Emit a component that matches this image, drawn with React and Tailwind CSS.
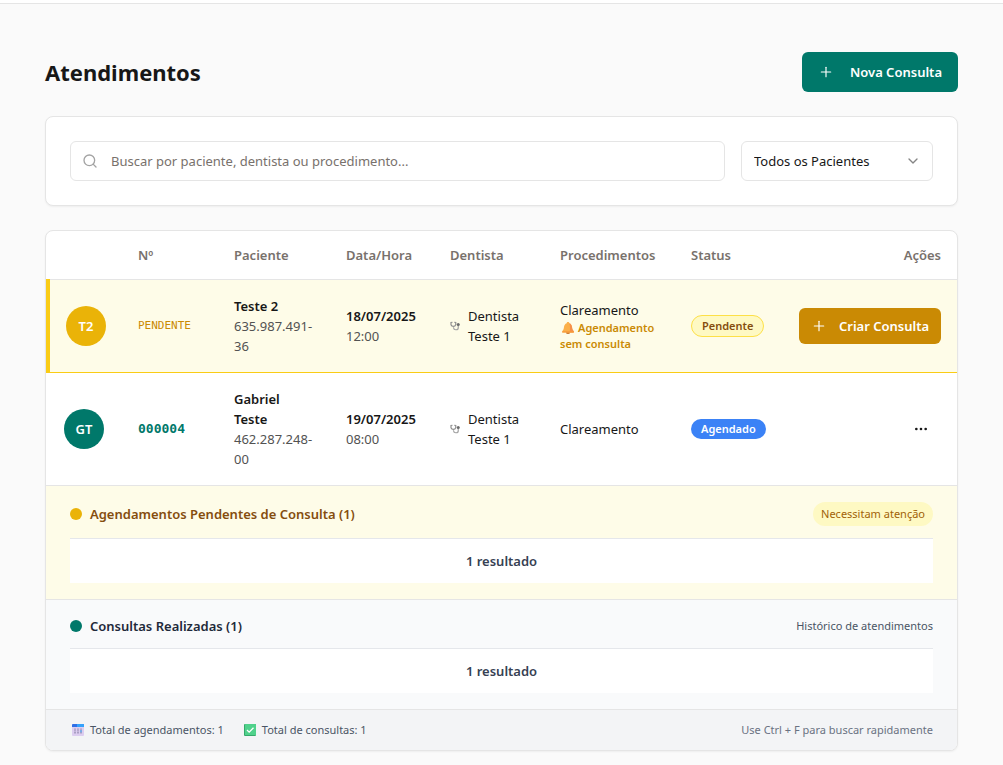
import { Plus, Search, ChevronDown, Ellipsis } from "lucide-react";

function StethoscopeIcon() {
  return (
    <svg viewBox="0 0 20 20" className="h-[10px] w-[10px] shrink-0" fill="none" aria-hidden="true">
      <path d="M5 2.500 2 3v4.500a5 5 0 0 0 9.500 0V3L8.500 2.500" stroke="#8f8f8f" strokeWidth="2.400" />
      <path d="M7 12.500v1a4.500 4.500 0 0 0 4.500 4h1a4 4 0 0 0 4-4V9" stroke="#a3a3a3" strokeWidth="2.400" />
      <circle cx="16.500" cy="7" r="3" fill="#6b6b6b" />
    </svg>
  );
}

function BellIcon() {
  return (
    <svg viewBox="0 0 24 24" className="mr-1 ml-[2px] inline-block h-3 w-3 align-[-2px]" aria-hidden="true">
      <ellipse cx="12" cy="21.500" rx="4" ry="2.500" fill="#c9762c" />
      <path d="M12 0c1.600 0 2.600 1.100 2.600 2.500C18 3.800 19.500 6.500 20 10c.4 4 1.300 6 3.500 8.500V21H.500v-2.500C2.700 16 3.600 14 4 10c.5-3.500 2-6.200 5.400-7.500C9.400 1.100 10.400 0 12 0z" fill="#fbb04a" />
      <path d="M14.600 2.500C18 3.800 19.500 6.500 20 10c.4 4 1.300 6 3.500 8.500V21H15c1.500-6 1.600-12.500-.4-18.500z" fill="#f58f4a" />
      <path d="M.5 18.500h23V21H.5z" fill="#f79a3a" />
    </svg>
  );
}

function CalendarIcon() {
  return (
    <svg viewBox="0 0 12 12" className="h-3 w-3" aria-hidden="true">
      <rect width="12" height="12" rx="1" fill="#dccdf0" />
      <path d="M1 0h10a1 1 0 0 1 1 1v2H0V1a1 1 0 0 1 1-1z" fill="#2f6fe6" />
      <path d="M5 0h6a1 1 0 0 1 1 1v2H5z" fill="#35a2fb" />
      <path d="M3 4.500v5M6 4.500v5M9 4.500v5" stroke="#9a8fb5" strokeWidth="1.500" strokeDasharray="1.300 .5" />
      <path d="M9 6.200v2" stroke="#5aa9ee" strokeWidth="1.500" />
    </svg>
  );
}

function CheckIcon() {
  return (
    <svg viewBox="0 0 12 12" className="h-3 w-3" aria-hidden="true">
      <rect width="12" height="12" rx="1" fill="#35a86b" />
      <rect x="1" width="11" height="11" rx=".5" fill="#4fd18b" />
      <path d="m3 6 2.200 2.200L9.500 3.800" stroke="#fff" strokeWidth="1.300" fill="none" />
    </svg>
  );
}

function Avatar({ children, className }) {
  return (
    <div className={`flex h-10 w-10 items-center justify-center rounded-full text-[13px] font-semibold text-white ${className}`}>
      {children}
    </div>
  );
}

function Patient({ name, doc }) {
  return (
    <td className="p-4">
      <div className="font-semibold text-[#171717]">{name}</div>
      <div className="text-[#525252]">{doc}</div>
    </td>
  );
}

function When({ date, time }) {
  return (
    <td className="p-4">
      <div className="font-semibold">{date}</div>
      <div className="text-[#525252]">{time}</div>
    </td>
  );
}

function Dentist({ name }) {
  return (
    <td className="p-4">
      <div className="flex items-center gap-2">
        <StethoscopeIcon />
        <span>{name}</span>
      </div>
    </td>
  );
}

function Group({ title, note, dot, className, titleClass, noteClass }) {
  return (
    <section className={`border-t border-[#e5e5e5] px-6 py-4 ${className}`}>
      <div className="mb-3 flex items-center justify-between">
        <h2 className={`flex items-center gap-2 text-[13px] leading-5 font-semibold ${titleClass}`}>
          <span className={`h-3 w-3 rounded-full ${dot}`} />
          {title}
        </h2>
        <span className={`text-[11px] leading-4 ${noteClass}`}>{note}</span>
      </div>
      <div className="border-t border-gray-200 bg-white py-3 text-center text-[13px] leading-5 font-semibold text-gray-700">
        1 resultado
      </div>
    </section>
  );
}

const headers = ["", "Nº", "Paciente", "Data/Hora", "Dentista", "Procedimentos", "Status"];

export default function App() {
  return (
    <div className="min-h-screen bg-[#fafafa] font-['Noto_Sans',sans-serif] text-[13px] leading-5 text-[#171717]">
      <header className="h-1 border-b border-[#e5e5e5] bg-white" />
      <main className="flex flex-col gap-6 px-[45px] pt-12 pb-3">
        <div className="flex items-center justify-between">
          <h1 className="text-[22px] leading-8 font-bold">Atendimentos</h1>
          <button type="button" className="flex h-10 items-center gap-4 rounded-md bg-[#00786a] px-4 font-semibold text-white">
            <Plus size={16} strokeWidth={1.75} />
            Nova Consulta
          </button>
        </div>

        <div className="flex gap-4 rounded-lg border border-[#e5e5e5] bg-white p-6 shadow-xs">
          <div className="relative flex-1">
            <Search size={16} className="absolute top-3 left-3 text-[#a3a3a3]" />
            <input
              type="text"
              aria-label="Buscar atendimentos"
              placeholder="Buscar por paciente, dentista ou procedimento..."
              className="h-10 w-full rounded-md border border-[#e5e5e5] bg-white pr-3 pl-10 placeholder:text-[#78716c]"
            />
          </div>
          <div className="relative w-48">
            <select aria-label="Filtrar pacientes" className="h-10 w-full appearance-none rounded-md border border-[#e5e5e5] bg-white px-3">
              <option>Todos os Pacientes</option>
            </select>
            <ChevronDown size={16} className="pointer-events-none absolute top-3 right-3 text-[#858585]" />
          </div>
        </div>

        <div className="overflow-hidden rounded-lg border border-[#e5e5e5] bg-white shadow-xs">
          <table className="w-full table-fixed border-collapse text-left">
            <colgroup>
              <col className="w-[74px]" />
              <col className="w-[96px]" />
              <col className="w-[112px]" />
              <col className="w-[104px]" />
              <col className="w-[110px]" />
              <col />
              <col className="w-[108px]" />
              <col className="w-[174px]" />
            </colgroup>
            <thead>
              <tr className="border-b border-[#e5e5e5] text-[#78716c]">
                {headers.map((h) => (
                  <th key={h} scope="col" className="h-12 px-4 font-semibold">{h}</th>
                ))}
                <th scope="col" className="h-12 px-4 text-right font-semibold">Ações</th>
              </tr>
            </thead>
            <tbody>
              <tr className="border-b border-l-4 border-b-[#facc15] border-l-[#facc15] bg-[#fefce8]">
                <td className="p-4"><Avatar className="bg-[#eab308]">T2</Avatar></td>
                <td className="p-4 font-['DejaVu_Sans_Mono',monospace] text-[11px] text-[#ca8a04]">PENDENTE</td>
                <Patient name="Teste 2" doc="635.987.491-36" />
                <When date="18/07/2025" time="12:00" />
                <Dentist name="Dentista Teste 1" />
                <td className="p-4">
                  <div>Clareamento</div>
                  <div className="text-[11px] leading-4 font-semibold text-[#ca8a04]">
                    <BellIcon />Agendamento sem consulta
                  </div>
                </td>
                <td className="p-4">
                  <span className="inline-block rounded-full border border-[#fde047] bg-[#fef9c3] px-[10px] py-[2px] text-[11px] leading-4 font-semibold text-[#854d0e]">
                    Pendente
                  </span>
                </td>
                <td className="p-4">
                  <button type="button" className="ml-auto flex h-9 items-center gap-3 rounded-md bg-[#ca8a04] px-3 font-semibold whitespace-nowrap text-white">
                    <Plus size={16} strokeWidth={1.75} />
                    Criar Consulta
                  </button>
                </td>
              </tr>
              <tr>
                <td className="p-4"><Avatar className="bg-[#00786a]">GT</Avatar></td>
                <td className="p-4 font-['DejaVu_Sans_Mono',monospace] font-bold text-[#00786a]">000004</td>
                <Patient name="Gabriel Teste" doc="462.287.248-00" />
                <When date="19/07/2025" time="08:00" />
                <Dentist name="Dentista Teste 1" />
                <td className="p-4">Clareamento</td>
                <td className="p-4">
                  <span className="inline-block rounded-full bg-[#3b82f6] px-[10px] py-[2px] text-[11px] leading-4 font-semibold text-white">
                    Agendado
                  </span>
                </td>
                <td className="p-4">
                  <button type="button" aria-label="Mais ações" className="ml-auto flex h-10 w-10 items-center justify-center">
                    <Ellipsis size={16} />
                  </button>
                </td>
              </tr>
            </tbody>
          </table>

          <Group
            title="Agendamentos Pendentes de Consulta (1)"
            note="Necessitam atenção"
            dot="bg-[#eab308]"
            className="bg-[#fefce8]"
            titleClass="text-[#854d0e]"
            noteClass="rounded-full bg-[#fef9c3] px-2 py-1 text-[#a16207]"
          />
          <Group
            title="Consultas Realizadas (1)"
            note="Histórico de atendimentos"
            dot="bg-[#00786a]"
            className="bg-gray-50"
            titleClass="text-gray-800"
            noteClass="text-gray-600"
          />

          <footer className="flex items-center justify-between border-t border-[#e5e5e5] bg-gray-100 pr-6 pl-[26px] py-3 text-[11px] leading-4 text-gray-600">
            <div className="flex gap-5">
              <span className="flex items-center gap-[6px]"><CalendarIcon />Total de agendamentos: 1</span>
              <span className="flex items-center gap-[6px]"><CheckIcon />Total de consultas: 1</span>
            </div>
            <span className="text-gray-500">Use Ctrl + F para buscar rapidamente</span>
          </footer>
        </div>
      </main>
    </div>
  );
}
